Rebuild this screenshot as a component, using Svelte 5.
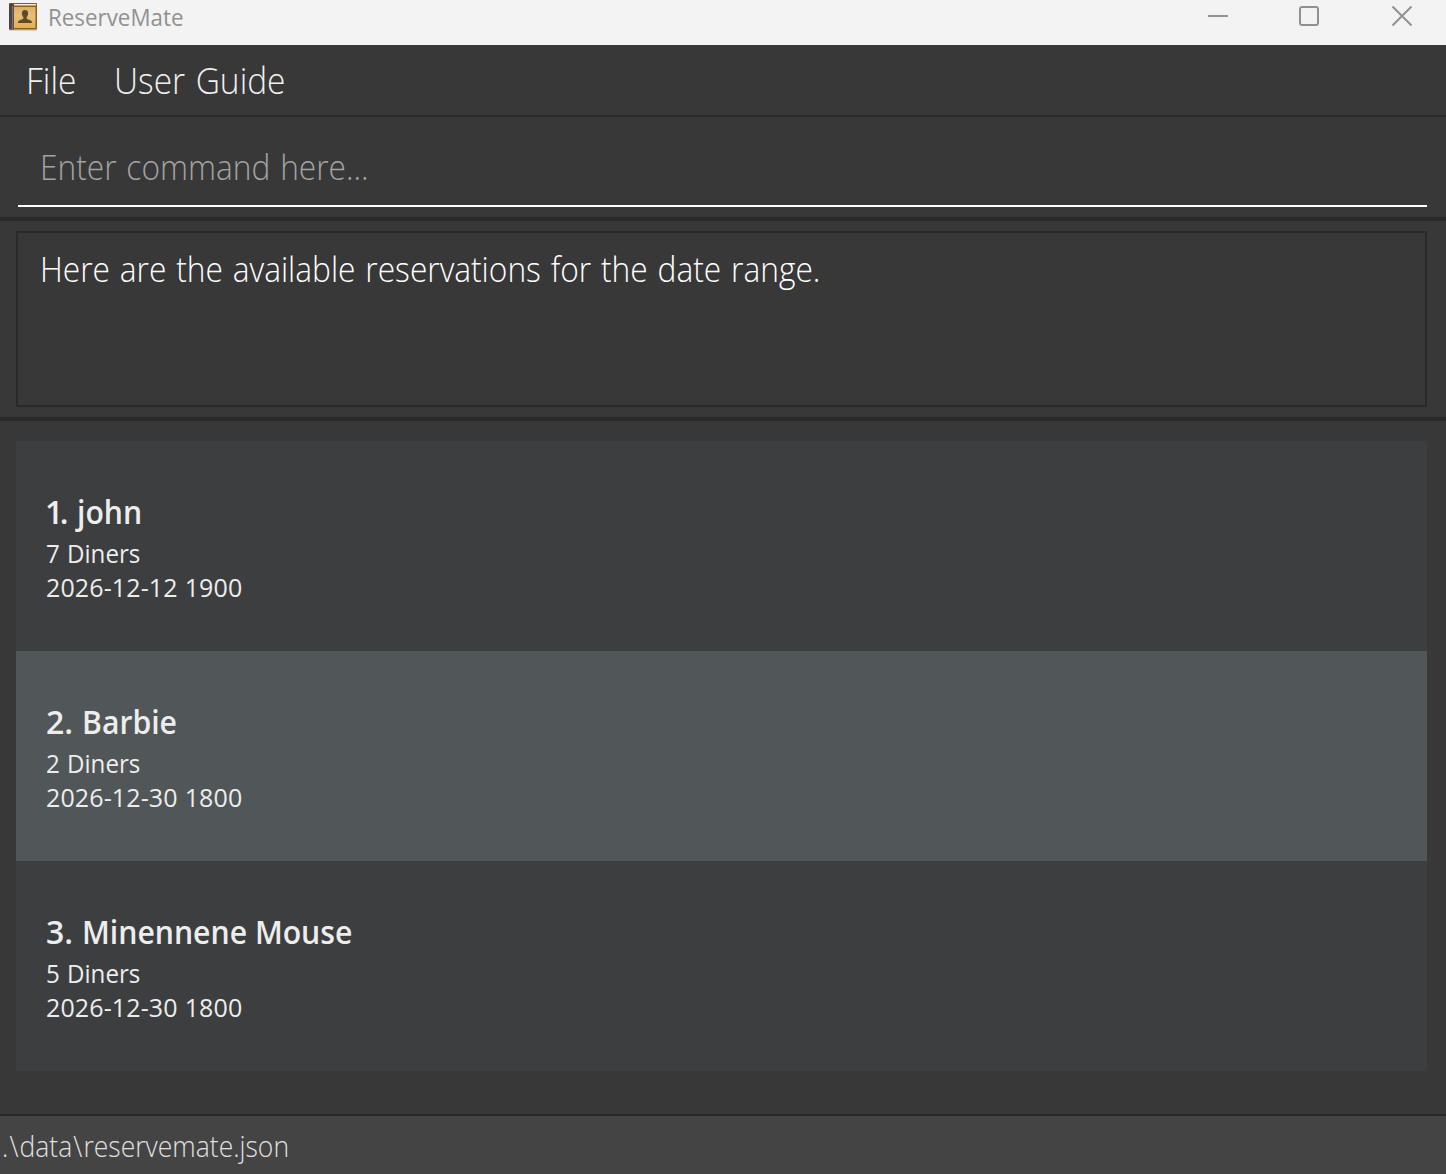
<script>
  const menus = ['File', 'User Guide'];
  const path = ['.', 'data', 'reservemate.json'];
  const reservations = [
    { name: 'john', diners: 7, time: '2026-12-12 1900' },
    { name: 'Barbie', diners: 2, time: '2026-12-30 1800' },
    { name: 'Minennene Mouse', diners: 5, time: '2026-12-30 1800' }
  ];
</script>

<div class="window">
  <header class="titlebar">
    <svg class="book" width="30" height="30" viewBox="0 0 30 30">
      <defs>
        <linearGradient id="cover" x1="0" y1="0" x2="0" y2="1">
          <stop offset="0" stop-color="#dcb069" />
          <stop offset="0.4" stop-color="#e6bf7c" />
          <stop offset="1" stop-color="#e3ae4f" />
        </linearGradient>
      </defs>
      <rect x="1" y="27" width="28" height="2" fill="#d5d3d0" />
      <rect x="1" y="1" width="28" height="26.5" rx="1" fill="#8e5d17" />
      <rect x="3" y="2" width="25" height="1.5" fill="#f5ead6" />
      <rect x="6" y="5" width="21.5" height="21" fill="url(#cover)" />
      <rect x="1" y="1.5" width="5" height="26" rx="1" fill="#51433f" />
      <rect x="4" y="4" width="1.3" height="23" fill="#80716b" />
      <path d="M17 8c-2.300 0-3.300 1.500-3.100 3.700.1 1.700.8 2.700 1.400 3.400v1.600c-1.200 1-5.300 1.200-5.300 3.600V21h14v-.7c0-2.400-4.100-2.600-5.300-3.600v-1.600c.6-.7 1.300-1.700 1.400-3.400C20.300 9.500 19.300 8 17 8z" fill="#5e4a2c" />
    </svg>
    <span class="title narrow">ReserveMate</span>
    <div class="controls">
      <svg width="22" height="22" viewBox="0 0 22 22"><path d="M1 11h20" /></svg>
      <svg width="22" height="22" viewBox="0 0 22 22"><rect x="2" y="2" width="18" height="18" rx="2" /></svg>
      <svg width="22" height="22" viewBox="0 0 22 22"><path d="M1.500 1.500l19 19M20.500 1.500l-19 19" /></svg>
    </div>
  </header>

  <nav class="menu">
    {#each menus as m}
      <span class="narrow">{m}</span>
    {/each}
  </nav>

  <section class="command">
    <div class="field"><span class="narrow">Enter command here...</span></div>
  </section>

  <section class="result">
    <div class="message"><span class="narrow">Here are the available reservations for the date range.</span></div>
  </section>

  <main class="list">
    {#each reservations as r, i}
      <article class="row" class:alt={i % 2 === 1}>
        <div class="heading">
          <span class="index">{i + 1}.</span>
          <span class="name narrow">{r.name}</span>
        </div>
        <div class="diners narrow">{r.diners} Diners</div>
        <div class="time">{r.time}</div>
      </article>
    {/each}
  </main>

  <footer class="status"><span class="narrow">{#each path as part, i}{#if i}<span class="sep">\</span>{/if}{part}{/each}</span></footer>
</div>

<style>
  .window {
    width: 1446px;
    height: 1174px;
    display: flex;
    flex-direction: column;
    background: #383838;
    color: #fff;
    font-family: 'Open Sans', 'Noto Sans', sans-serif;
    white-space: nowrap;
    overflow: hidden;
  }
  .window * { box-sizing: border-box; }
  /* Slightly condensed lettering */
  .narrow {
    display: inline-block;
    transform: scaleX(var(--sx));
    transform-origin: 0 50%;
  }
  .titlebar {
    --sx: 0.972;
    height: 45px;
    flex: none;
    display: flex;
    align-items: flex-start;
    background: #f3f3f3;
    color: #919191;
    padding: 2px 33px 0 8px;
  }
  .book { flex: none; }
  .title { font-size: 23px; line-height: 31px; margin-left: 10px; }
  .controls { margin-left: auto; display: flex; gap: 70px; padding-top: 3px; }
  .controls svg { fill: none; stroke: #919191; stroke-width: 2; }
  .controls svg:nth-child(2) { margin: 0 1px 0 -1px; }
  .menu {
    --sx: 0.93;
    height: 72px;
    flex: none;
    display: flex;
    border-bottom: 2px solid #2a2a2a;
    font-size: 36px;
    font-weight: 300;
    line-height: 71px;
    word-spacing: 2px;
    padding-left: 26px;
    gap: 34px;
    color: #f0f0f0;
  }
  .command {
    height: 104px;
    flex: none;
    border-bottom: 4px solid #2a2a2a;
    padding: 10px 19px 10px 18px;
  }
  .field {
    --sx: 0.905;
    height: 80px;
    border-bottom: 2px solid #fff;
    padding: 0 0 0 22px;
    font-size: 35px;
    font-weight: 300;
    line-height: 79px;
    word-spacing: 1.8px;
    color: #a3a3a3;
  }
  .result {
    height: 200px;
    flex: none;
    border-bottom: 4px solid #2a2a2a;
    padding: 10px 19px 10px 16px;
  }
  .message {
    --sx: 0.906;
    height: 176px;
    border: 2px solid #2a2a2a;
    padding: 11px 22px;
    font-size: 35px;
    font-weight: 300;
    line-height: 50px;
    word-spacing: 1.75px;
  }
  .list { height: 693px; flex: none; padding: 20px 19px 0 16px; color: #ededed; }
  .row {
    height: 210px;
    background: #3c3e3f;
    padding: 48px 30px 0;
    display: flex;
    flex-direction: column;
    align-items: flex-start;
  }
  .row.alt { background: #515658; }
  .heading { --sx: 0.943; display: flex; gap: 9px; font-size: 32px; font-weight: 600; line-height: 46px; }
  .row:first-child .index { letter-spacing: -3.5px; margin-left: -1px; }
  .row:first-child .heading { gap: 12px; }
  .diners, .time { font-size: 25px; line-height: 34px; }
  .diners { --sx: 0.965; margin-top: 1px; word-spacing: 1px; }
  .time { letter-spacing: 0.12px; word-spacing: 0.4px; }
  .status {
    --sx: 0.914;
    height: 60px;
    flex: none;
    border-top: 2px solid #2a2a2a;
    background: #444;
    color: #e0e0e0;
    font-size: 29px;
    font-weight: 300;
    line-height: 59px;
    padding-left: 2px;
  }
  .sep { margin: 0 1.2px; }
</style>
